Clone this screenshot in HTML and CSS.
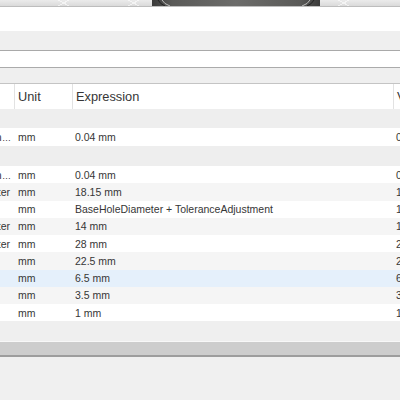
FILE: index.html
```html
<!DOCTYPE html>
<html>
<head>
<meta charset="utf-8">
<link rel="stylesheet" href="styles.css">
</head>
<body>
<div class="strip">
  <div class="render">
    <svg width="168" height="6" viewBox="0 0 168 6">
      <defs>
        <linearGradient id="g" x1="0" y1="0" x2="1" y2="0">
          <stop offset="0" stop-color="#3a3a3a"/>
          <stop offset="0.12" stop-color="#5a5a58"/>
          <stop offset="0.5" stop-color="#6c6c6a"/>
          <stop offset="0.88" stop-color="#5a5a58"/>
          <stop offset="1" stop-color="#3a3a3a"/>
        </linearGradient>
      </defs>
      <rect x="0" y="0" width="168" height="6" fill="url(#g)"/>
      <path d="M10 0 Q12 4 18 6" stroke="#d8d8d8" stroke-width="0.8" fill="none"/>
      <path d="M158 0 Q156 4 150 6" stroke="#d8d8d8" stroke-width="0.8" fill="none"/>
      <path d="M6 0 Q8 4 13 6" stroke="#222" stroke-width="1" fill="none"/>
      <path d="M162 0 Q160 4 155 6" stroke="#222" stroke-width="1" fill="none"/>
    </svg>
  </div>
</div>
<div class="blank"></div>
<div class="bar bar-grey"></div>
<div class="bar bar-white"></div>
<div class="bar bar-grey2"></div>

<div class="table">
  <div class="row head">
    <div class="cell name"><span>Name</span></div>
    <div class="cell unit">Unit</div>
    <div class="cell expr">Expression</div>
    <div class="cell val">Value</div>
  </div>
  <div class="row group first-group">
    <div class="cell name"></div><div class="cell unit"></div><div class="cell expr"></div><div class="cell val"></div>
  </div>
  <div class="row data tall">
    <div class="cell name"><span>ThreadClearan<span class="ell">…</span></span></div>
    <div class="cell unit">mm</div>
    <div class="cell expr">0.04 mm</div>
    <div class="cell val">0.04</div>
  </div>
  <div class="row group second-group">
    <div class="cell name"></div><div class="cell unit"></div><div class="cell expr"></div><div class="cell val"></div>
  </div>
  <div class="row data">
    <div class="cell name"><span>ToleranceAdjustmen<span class="ell">…</span></span></div>
    <div class="cell unit">mm</div>
    <div class="cell expr">0.04 mm</div>
    <div class="cell val">0.04</div>
  </div>
  <div class="row data alt">
    <div class="cell name"><span>BaseHoleDiameter</span></div>
    <div class="cell unit">mm</div>
    <div class="cell expr">18.15 mm</div>
    <div class="cell val">18.15</div>
  </div>
  <div class="row data">
    <div class="cell name"></div>
    <div class="cell unit">mm</div>
    <div class="cell expr">BaseHoleDiameter + ToleranceAdjustment</div>
    <div class="cell val">18.19</div>
  </div>
  <div class="row data alt">
    <div class="cell name"><span>InnerDiameter</span></div>
    <div class="cell unit">mm</div>
    <div class="cell expr">14 mm</div>
    <div class="cell val">14</div>
  </div>
  <div class="row data">
    <div class="cell name"><span>OuterDiameter</span></div>
    <div class="cell unit">mm</div>
    <div class="cell expr">28 mm</div>
    <div class="cell val">28</div>
  </div>
  <div class="row data alt">
    <div class="cell name"></div>
    <div class="cell unit">mm</div>
    <div class="cell expr">22.5 mm</div>
    <div class="cell val">22.5</div>
  </div>
  <div class="row data selected">
    <div class="cell name"></div>
    <div class="cell unit">mm</div>
    <div class="cell expr">6.5 mm</div>
    <div class="cell val">6.5</div>
  </div>
  <div class="row data alt">
    <div class="cell name"></div>
    <div class="cell unit">mm</div>
    <div class="cell expr">3.5 mm</div>
    <div class="cell val">3.5</div>
  </div>
  <div class="row data">
    <div class="cell name"></div>
    <div class="cell unit">mm</div>
    <div class="cell expr">1 mm</div>
    <div class="cell val">1</div>
  </div>
</div>
<div class="table-foot"></div>
<div class="hscroll"></div>
</body>
</html>
```

FILE: styles.css
```css
html, body {
  margin: 0;
  padding: 0;
}
body {
  background: #f0f0f0;
  font-family: "Liberation Sans", Arial, sans-serif;
  color: #363636;
  overflow: hidden;
}
.strip {
  height: 6px;
  border-bottom: 1px solid #bdbdbd;
  background:
    repeating-linear-gradient(30deg, rgba(255,255,255,0) 0 34px, rgba(255,255,255,0.6) 34px 35px),
    repeating-linear-gradient(150deg, rgba(255,255,255,0) 0 34px, rgba(255,255,255,0.6) 34px 35px),
    linear-gradient(#ebebeb, #dadada);
  display: flex;
}
.render {
  margin-left: 152px;
  width: 168px;
  height: 6px;
}
.render svg { display: block; }
.blank {
  height: 24px;
  background: #fff;
}
.bar-grey {
  height: 19px;
  background: #efefef;
  border-bottom: 1px solid #a9a9a9;
}
.bar-white {
  height: 16px;
  background: #fff;
  border-bottom: 1px solid #ababab;
}
.bar-grey2 {
  height: 15px;
  background: #efefef;
  border-bottom: 1px solid #c4c4c4;
}
.table {
  background: #fff;
  overflow: hidden;
}
.row {
  display: grid;
  grid-template-columns: 14px 58px 321px 1fr;
  height: 17.25px;
  align-items: center;
  font-size: 10.5px;
  white-space: nowrap;
}
.cell {
  overflow: hidden;
  height: 100%;
  display: flex;
  align-items: center;
}
.unit { padding-left: 4px; }
.expr { padding-left: 3px; }
.val { padding-left: 3px; }
.name {
  justify-content: flex-end;
  padding-right: 4px;
}
.name > span { flex: none; }
.ell {
  letter-spacing: -1px;
  font-size: 9px;
  margin-left: 0.5px;
}
.head {
  height: 25px;
  font-size: 12.8px;
  background: #fff;
}
.head .unit, .head .expr, .head .val {
  border-left: 1px solid #e2e2e2;
  padding-left: 3px;
}
.head .name span { visibility: hidden; }
.group { background: #eeeeee; }
.first-group { height: 19px; }
.second-group { height: 20px; }
.tall { height: 18px; }
.alt { background: #f5f5f5; }
.selected { background: #e5f0fb; }
.table-foot {
  height: 20px;
  background: #efefef;
}
.hscroll {
  height: 13px;
  background: #cdcdcd;
  border-top: 1px solid #f8f8f8;
  border-bottom: 2px solid #9d9d9d;
}
```
